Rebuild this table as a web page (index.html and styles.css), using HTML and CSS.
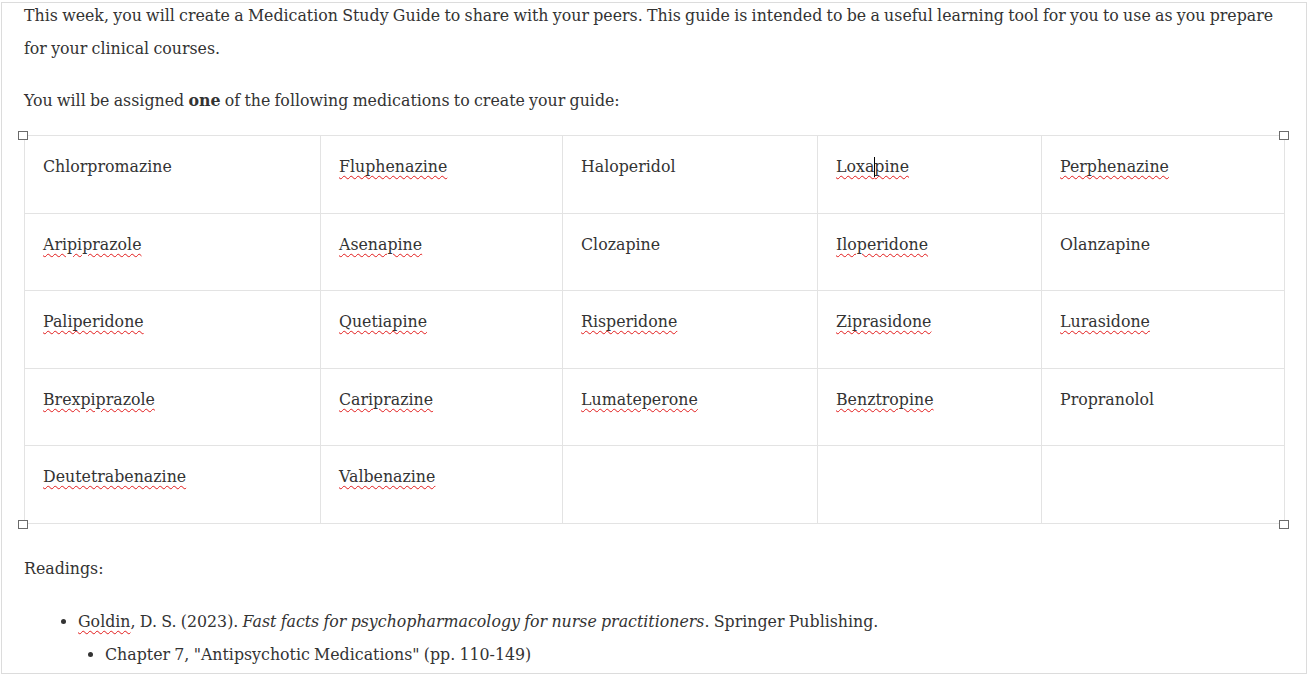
FILE: index.html
```html
<!DOCTYPE html>
<html>
<head>
<meta charset="utf-8">
<link rel="stylesheet" href="styles.css">
</head>
<body>
<div class="frame">
  <div class="doc">
    <p class="first">This week, you will create a Medication Study Guide to share with your peers. This guide is intended to be a useful learning tool for you to use as you prepare for your clinical courses.</p>
    <p class="intro">You will be assigned <strong>one</strong> of the following medications to create your guide:</p>
    <div class="table-wrap">
      <table class="meds">
        <colgroup>
          <col class="c1"><col class="c2"><col class="c3"><col class="c4"><col class="c5">
        </colgroup>
        <tbody>
          <tr>
            <td>Chlorpromazine</td>
            <td><span class="sp">Fluphenazine</span></td>
            <td>Haloperidol</td>
            <td><span class="sp">Loxa<span class="caret"></span>pine</span></td>
            <td><span class="sp">Perphenazine</span></td>
          </tr>
          <tr>
            <td><span class="sp">Aripiprazole</span></td>
            <td><span class="sp">Asenapine</span></td>
            <td>Clozapine</td>
            <td><span class="sp">Iloperidone</span></td>
            <td>Olanzapine</td>
          </tr>
          <tr>
            <td><span class="sp">Paliperidone</span></td>
            <td><span class="sp">Quetiapine</span></td>
            <td><span class="sp">Risperidone</span></td>
            <td><span class="sp">Ziprasidone</span></td>
            <td><span class="sp">Lurasidone</span></td>
          </tr>
          <tr>
            <td><span class="sp">Brexpiprazole</span></td>
            <td><span class="sp">Cariprazine</span></td>
            <td><span class="sp">Lumateperone</span></td>
            <td><span class="sp">Benztropine</span></td>
            <td>Propranolol</td>
          </tr>
          <tr>
            <td><span class="sp">Deutetrabenazine</span></td>
            <td><span class="sp">Valbenazine</span></td>
            <td></td>
            <td></td>
            <td></td>
          </tr>
        </tbody>
      </table>
      <span class="handle h-tl"></span>
      <span class="handle h-tr"></span>
      <span class="handle h-bl"></span>
      <span class="handle h-br"></span>
    </div>
    <p class="readings">Readings:</p>
    <ul class="refs">
      <li><span class="sp">Goldin</span>, D. S. (2023). <em>Fast facts for psychopharmacology for nurse practitioners</em>. Springer Publishing.
        <ul class="sub">
          <li>Chapter 7, "Antipsychotic Medications" (pp. 110-149)</li>
        </ul>
      </li>
    </ul>
  </div>
</div>
</body>
</html>
```

FILE: styles.css
```css
html, body {
  margin: 0;
  padding: 0;
  background: #ffffff;
}

.frame {
  margin: 2px 0 0 1px;
  width: 1306px;
  height: 672px;
  box-sizing: border-box;
  border: 1px solid #dcdcdc;
  overflow: hidden;
  background: #ffffff;
}

.doc {
  padding: 0 22px 0 22px;
  font-family: "DejaVu Serif", Georgia, serif;
  font-size: 15.8px;
  line-height: 33px;
  word-spacing: -0.75px;
  color: #333333;
}

.doc p {
  margin: 0 0 19px 0;
}

.doc p.first {
  margin-top: -4px;
}

.doc p.intro {
  margin-bottom: 18px;
}

.table-wrap {
  position: relative;
  width: 1260px;
}

.meds {
  width: 1260px;
  border-collapse: collapse;
  table-layout: fixed;
}

.meds .c1 { width: 296px; }
.meds .c2 { width: 242px; }
.meds .c3 { width: 255px; }
.meds .c4 { width: 224px; }
.meds .c5 { width: 243px; }

.meds td {
  border: 1px solid #e3e3e3;
  height: 77.6px;
  box-sizing: border-box;
  padding: 18px 18px 0 18px;
  vertical-align: top;
  line-height: 26px;
}

.sp {
  text-decoration: underline wavy #e21b1b;
  text-decoration-thickness: 1px;
  text-underline-offset: 3px;
}

.caret {
  display: inline-block;
  width: 1px;
  height: 20px;
  margin-right: -1px;
  background: #000000;
  vertical-align: -5px;
}

.handle {
  position: absolute;
  width: 10px;
  height: 9px;
  box-sizing: border-box;
  border: 1px solid #6b6b6b;
  background: #ffffff;
}

.h-tl { left: -6px; top: -4px; }
.h-tr { right: -5px; top: -4px; }
.h-bl { left: -6px; bottom: -5px; }
.h-br { right: -5px; bottom: -5px; }

.doc p.readings {
  margin: 28px 0 20px 0;
}

.refs {
  margin: 0;
  padding-left: 54px;
  list-style: disc;
}

.refs .sub {
  margin: 0;
  padding-left: 27px;
  list-style: disc;
}
```
